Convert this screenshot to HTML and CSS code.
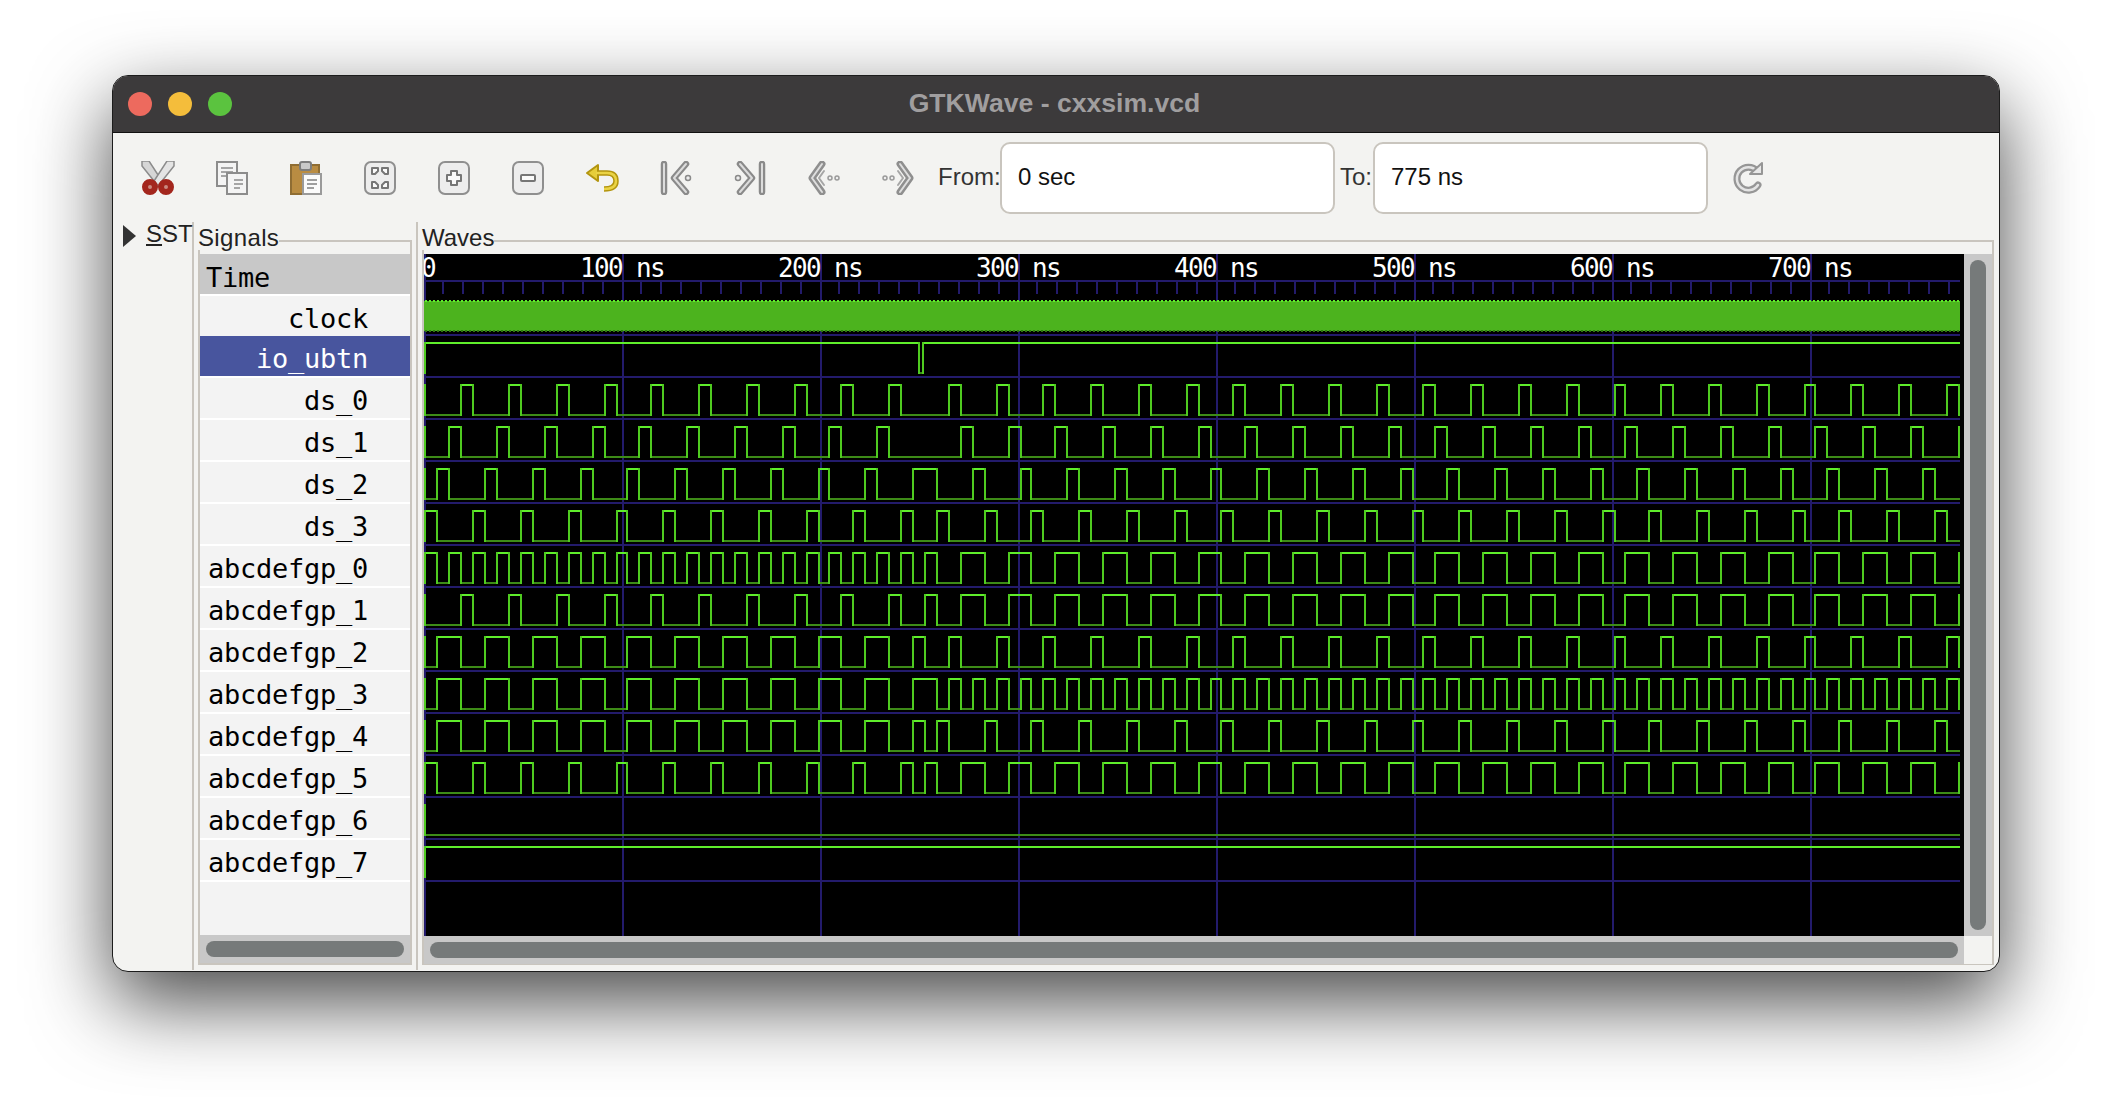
FILE: index.html
```html
<!DOCTYPE html>
<html lang="en">
<head>
  <meta charset="UTF-8" />
  <title>GTKWave - cxxsim.vcd</title>
  <link rel="stylesheet" href="styles.css">
</head>
<body>

  <div class="window">

    <!-- Title bar -->
    <header class="titlebar">
      <div class="lights">
        <span class="light light-red"></span>
        <span class="light light-yellow"></span>
        <span class="light light-green"></span>
      </div>
      <div class="title">GTKWave - cxxsim.vcd</div>
    </header>

    <!-- Toolbar -->
    <div class="toolbar">
      <div class="tool">
        <svg width="34" height="34" viewBox="0 0 34 34">
          <path d="M1 0 L8 0 L21 20 L17 25 L1 5 Z" fill="#d6d6d6" stroke="#8c8c8c" stroke-width="1.5"/>
          <path d="M33 0 L26 0 L13 20 L17 25 L33 5 Z" fill="#e4e4e4" stroke="#8c8c8c" stroke-width="1.5"/>
          <circle cx="9" cy="26" r="5" fill="#c98a80" stroke="#a3261d" stroke-width="6"/>
          <circle cx="25" cy="26" r="5" fill="#c98a80" stroke="#a3261d" stroke-width="6"/>
        </svg>
      </div>
      <div class="tool">
        <svg width="34" height="34" viewBox="0 0 34 34">
          <rect x="2" y="1" width="20" height="24" fill="#f4f4f4" stroke="#8c8c8c" stroke-width="2"/>
          <path d="M6 7 H18 M6 11 H18 M6 15 H15" stroke="#a5a5a5" stroke-width="2"/>
          <rect x="12" y="12" width="20" height="21" fill="#f4f4f4" stroke="#8c8c8c" stroke-width="2"/>
          <path d="M19 19 H28 M19 23 H28 M19 27 H25" stroke="#a5a5a5" stroke-width="2"/>
        </svg>
      </div>
      <div class="tool">
        <svg width="34" height="34" viewBox="0 0 34 34">
          <rect x="2" y="4" width="28" height="29" fill="#b98c42" stroke="#8f6d33" stroke-width="2"/>
          <rect x="11" y="1" width="11" height="8" rx="2" fill="#c9c9c9" stroke="#7d7d7d" stroke-width="2"/>
          <rect x="14" y="13" width="18" height="20" fill="#fbfbfb" stroke="#9a9a9a" stroke-width="2"/>
          <path d="M18 19 H28 M18 23 H28 M18 27 H25" stroke="#9f9f9f" stroke-width="2"/>
        </svg>
      </div>
      <div class="tool">
        <svg width="34" height="34" viewBox="0 0 34 34">
          <rect x="2" y="1" width="30" height="32" rx="6" fill="#ededed" stroke="#8f8f8f" stroke-width="2"/>
          <path d="M9 7 H15 V10 L12 13 H9 Z M25 7 H19 V10 L22 13 H25 Z M9 27 H15 V24 L12 21 H9 Z M25 27 H19 V24 L22 21 H25 Z" fill="#fafafa" stroke="#767676" stroke-width="2" stroke-linejoin="round"/>
        </svg>
      </div>
      <div class="tool">
        <svg width="34" height="34" viewBox="0 0 34 34">
          <rect x="2" y="1" width="30" height="32" rx="6" fill="#ededed" stroke="#8f8f8f" stroke-width="2"/>
          <path d="M14 10 H20 V14 H24 V20 H20 V24 H14 V20 H10 V14 H14 Z" fill="#fafafa" stroke="#767676" stroke-width="2" stroke-linejoin="round"/>
        </svg>
      </div>
      <div class="tool">
        <svg width="34" height="34" viewBox="0 0 34 34">
          <rect x="2" y="1" width="30" height="32" rx="6" fill="#ededed" stroke="#8f8f8f" stroke-width="2"/>
          <rect x="10" y="14" width="14" height="6" rx="1" fill="#fafafa" stroke="#767676" stroke-width="2"/>
        </svg>
      </div>
      <div class="tool">
        <svg width="34" height="34" viewBox="0 0 34 34">
          <path d="M8 12 H22 Q31 12 31 20 Q31 28 19 28" fill="none" stroke="#b3950f" stroke-width="5.5"/>
          <path d="M2 12 L13 4 V20 Z" fill="#e6cd3a" stroke="#b3950f" stroke-width="2" stroke-linejoin="round"/>
          <path d="M11 12 H22 Q31 12 31 20 Q31 28 19 28" fill="none" stroke="#ead345" stroke-width="2.5"/>
        </svg>
      </div>
      <div class="tool">
        <svg width="34" height="34" viewBox="0 0 34 34">
          <path d="M5 3 V31 M27 3 L15 17 L27 31" fill="none" stroke="#8a8a8a" stroke-width="6.5" stroke-linecap="round" stroke-linejoin="round"/>
          <path d="M5 3 V31 M27 3 L15 17 L27 31" fill="none" stroke="#dcdcdc" stroke-width="2" stroke-linecap="round" stroke-linejoin="round"/>
          <circle cx="29" cy="17" r="2.5" fill="#ededed" stroke="#8a8a8a" stroke-width="1.5"/>
        </svg>
      </div>
      <div class="tool">
        <svg width="34" height="34" viewBox="0 0 34 34">
          <path d="M29 3 V31 M7 3 L19 17 L7 31" fill="none" stroke="#8a8a8a" stroke-width="6.5" stroke-linecap="round" stroke-linejoin="round"/>
          <path d="M29 3 V31 M7 3 L19 17 L7 31" fill="none" stroke="#dcdcdc" stroke-width="2" stroke-linecap="round" stroke-linejoin="round"/>
          <circle cx="5" cy="17" r="2.5" fill="#ededed" stroke="#8a8a8a" stroke-width="1.5"/>
        </svg>
      </div>
      <div class="tool">
        <svg width="34" height="34" viewBox="0 0 34 34">
          <path d="M15 3 L5 17 L15 31" fill="none" stroke="#8f8f8f" stroke-width="7" stroke-linecap="round" stroke-linejoin="round"/>
          <path d="M15 3 L5 17 L15 31" fill="none" stroke="#dedede" stroke-width="2" stroke-linecap="round" stroke-linejoin="round"/>
          <path d="M17 10 L12 17 L17 24" fill="none" stroke="#a6a6a6" stroke-width="2" stroke-linecap="round" stroke-linejoin="round"/>
          <circle cx="23" cy="17" r="2" fill="#ededed" stroke="#9a9a9a" stroke-width="1.5"/>
          <circle cx="30" cy="17" r="2" fill="#ededed" stroke="#9a9a9a" stroke-width="1.5"/>
        </svg>
      </div>
      <div class="tool">
        <svg width="34" height="34" viewBox="0 0 34 34">
          <path d="M19 3 L29 17 L19 31" fill="none" stroke="#8f8f8f" stroke-width="7" stroke-linecap="round" stroke-linejoin="round"/>
          <path d="M19 3 L29 17 L19 31" fill="none" stroke="#dedede" stroke-width="2" stroke-linecap="round" stroke-linejoin="round"/>
          <path d="M17 10 L22 17 L17 24" fill="none" stroke="#a6a6a6" stroke-width="2" stroke-linecap="round" stroke-linejoin="round"/>
          <circle cx="4" cy="17" r="2" fill="#ededed" stroke="#9a9a9a" stroke-width="1.5"/>
          <circle cx="11" cy="17" r="2" fill="#ededed" stroke="#9a9a9a" stroke-width="1.5"/>
        </svg>
      </div>

      <span class="range-label from-label">From:</span>
      <div class="range-entry"><span>0 sec</span></div>
      <span class="range-label to-label">To:</span>
      <div class="range-entry"><span>775 ns</span></div>

      <div class="tool reload">
        <svg width="34" height="34" viewBox="0 0 34 34">
          <path d="M25 10 A11.5 11.5 0 1 0 26 24" fill="none" stroke="#969696" stroke-width="7" stroke-linecap="round"/>
          <path d="M25 10 A11.5 11.5 0 1 0 26 24" fill="none" stroke="#e4e4e4" stroke-width="2.5" stroke-linecap="round"/>
          <path d="M18 13 H30 V2 Z" fill="#e8e8e8" stroke="#969696" stroke-width="2" stroke-linejoin="round"/>
        </svg>
      </div>
    </div>

    <!-- Panes -->
    <div class="panes">
      <div class="sst-pane">
        <div class="sst-head">
          <span class="expander"></span>
          <span class="sst-label"><u>S</u>ST</span>
        </div>
      </div>

      <div class="signals-pane">
        <div class="frame-head">
          <span class="frame-label signals-label">Signals</span>
          <span class="frame-rule"></span>
        </div>
        <div class="frame-body">
          <div class="signal-list">
            <div class="signal-time">Time</div>
            <div class="signal-row above-selected">clock</div>
            <div class="signal-row selected">io_ubtn</div>
            <div class="signal-row">ds_0</div>
            <div class="signal-row">ds_1</div>
            <div class="signal-row">ds_2</div>
            <div class="signal-row">ds_3</div>
            <div class="signal-row">abcdefgp_0</div>
            <div class="signal-row">abcdefgp_1</div>
            <div class="signal-row">abcdefgp_2</div>
            <div class="signal-row">abcdefgp_3</div>
            <div class="signal-row">abcdefgp_4</div>
            <div class="signal-row">abcdefgp_5</div>
            <div class="signal-row">abcdefgp_6</div>
            <div class="signal-row">abcdefgp_7</div>
          </div>
          <div class="hscroll"><div class="thumb"></div></div>
        </div>
      </div>

      <div class="waves-pane">
        <div class="frame-head">
          <span class="frame-label">Waves</span>
          <span class="frame-rule"></span>
        </div>
        <div class="frame-body wave-grid">
          <svg id="waves" class="wave-canvas" width="1540" height="682" viewBox="0 0 1540 682"></svg>
          <div class="vscroll"><div class="thumb"></div></div>
          <div class="hscroll"><div class="thumb"></div></div>
          <div class="scroll-corner"></div>
        </div>
      </div>
    </div>
  </div>

  <script src="script.js"></script>
</body>
</html>
```

FILE: styles.css
```css
:root {
  --chrome: #f3f3f1;
  --titlebar: #3c3a3b;
  --line: #c9c5be;
  --trough: #c8c8c8;
  --thumb: #767a7a;
  --selected: #48559e;
}

* {
  box-sizing: border-box;
}

body {
  margin: 0;
  padding: 75px 0 0 112px;
  height: 100vh;
  overflow: hidden;
  background: #fff;
  font-family: "Liberation Sans", Arial, sans-serif;
  font-size: 24px;
  color: #222;
}

.window {
  width: 1888px;
  height: 897px;
  display: flex;
  flex-direction: column;
  background: var(--chrome);
  border: 1px solid #1c1c1c;
  border-radius: 16px;
  overflow: hidden;
  box-shadow: 0 30px 80px rgba(0, 0, 0, 0.72);
}

.titlebar {
  height: 57px;
  flex: none;
  display: flex;
  align-items: center;
  background: var(--titlebar);
  border-bottom: 1px solid #111;
}

.lights {
  display: flex;
  gap: 16px;
  padding-left: 15px;
  width: 119px;
}

.light {
  width: 24px;
  height: 24px;
  border-radius: 50%;
}

.light-red { background: #ed6a5e; }
.light-yellow { background: #f4bd3b; }
.light-green { background: #5bc33f; }

.title {
  flex: 1;
  padding: 0 122px 2px 0;
  text-align: center;
  font-size: 26.6px;
  font-weight: bold;
  color: #a09e9f;
}

.toolbar {
  height: 89px;
  flex: none;
  display: flex;
  align-items: center;
  padding-left: 8px;
}

.tool {
  width: 74px;
  flex: none;
  display: flex;
  justify-content: center;
}

.range-label {
  flex: none;
  padding-bottom: 2px;
  color: #333;
}

.from-label {
  margin-left: 3px;
  width: 62px;
}

.to-label {
  margin-left: 5px;
  width: 33px;
}

.range-entry {
  width: 335px;
  height: 72px;
  flex: none;
  display: flex;
  align-items: center;
  padding: 0 0 2px 16px;
  background: #fff;
  border: 2px solid var(--line);
  border-radius: 10px;
  color: #111;
}

.reload {
  margin-left: 4px;
}

.panes {
  flex: 1;
  display: flex;
  min-height: 0;
}

.sst-pane {
  width: 81px;
  flex: none;
  border-right: 2px solid var(--line);
  margin-bottom: 1px;
}

.sst-head {
  height: 28px;
  display: flex;
  align-items: center;
  padding-left: 10px;
  gap: 10px;
}

.expander {
  width: 0;
  height: 0;
  border-style: solid;
  border-width: 11px 0 11px 13px;
  border-color: transparent transparent transparent #333;
}

.sst-label {
  line-height: 24px;
  margin-top: -4px;
  white-space: nowrap;
}

.signals-pane,
.waves-pane {
  display: flex;
  flex-direction: column;
  padding: 0 0 5px 4px;
  margin-bottom: 1px;
}

.signals-pane {
  width: 224px;
  flex: none;
  padding-right: 4px;
  border-right: 2px solid var(--line);
}

.waves-pane {
  flex: 1;
  padding-right: 5px;
}

.frame-head {
  height: 28px;
  flex: none;
  display: flex;
}

.frame-label {
  line-height: 28px;
  padding-top: 2px;
  white-space: nowrap;
}

.signals-label {
  letter-spacing: 0.35px;
}

.frame-rule {
  flex: 1;
  align-self: flex-end;
  height: 10px;
  border-top: 2px solid var(--line);
  border-right: 2px solid var(--line);
}

.frame-body {
  flex: 1;
  display: flex;
  flex-direction: column;
  min-height: 0;
  padding-top: 4px;
  border: 2px solid var(--line);
  border-top: 0;
}

.signal-list {
  flex: 1;
  background: #f3f3f3;
  font-family: "DejaVu Sans Mono", monospace;
  font-size: 27px;
  letter-spacing: -0.25px;
  color: #000;
}

.signal-time {
  height: 42px;
  padding: 5px 6px 0;
  line-height: 38px;
  background: var(--trough);
  background-clip: padding-box;
  border-bottom: 2px solid #fff;
}

.signal-row {
  height: 42px;
  padding: 4px 42px 0 0;
  line-height: 38px;
  text-align: right;
  border-bottom: 2px solid #fff;
}

.signal-row.above-selected {
  height: 40px;
  border-bottom: 0;
}

.signal-row.selected {
  background: var(--selected);
  color: #fff;
}

.hscroll {
  height: 28px;
  flex: none;
  padding: 6px;
  background: var(--trough);
}

.vscroll {
  padding: 6px;
  background: var(--trough);
}

.thumb {
  width: 100%;
  height: 100%;
  border-radius: 8px;
  background: var(--thumb);
}

.wave-grid {
  display: grid;
  grid-template-columns: 1540px 28px;
  grid-template-rows: 682px 28px;
}

.wave-canvas {
  display: block;
  background: #000;
}

.scroll-corner {
  background: var(--chrome);
}

.ruler-label {
  font-family: "DejaVu Sans Mono", monospace;
  font-size: 26px;
  letter-spacing: -1.65px;
  fill: #fff;
}
```

FILE: script.js
```js
// GTKWave traces. One time slot is 6 ns, screen x is quantized to 2px.
const SLOT = 6;
const END_NS = 775;
const OX = 424;
const OY = 254;
const GRID = "#231b6c";
const HIGH = "#5fee2b";
const EDGE = "#4fcb20";
const LOW = "#3d8b17";

const svg = document.getElementById("waves");

function xAt(t) {
  if (t === 0) return 425 - OX;
  return 427 + 2 * Math.floor(t * 0.99) - OX;
}

// before 246ns / the three slots of the button press / after
const signals = [
  { before: "0001", press: "000", after: "1000" }, // ds_0
  { before: "0010", press: "000", after: "0100" }, // ds_1
  { before: "0100", press: "110", after: "0010" }, // ds_2
  { before: "1000", press: "001", after: "0001" }, // ds_3
  { before: "1010", press: "010", after: "0110" }, // abcdefgp_0
  { before: "0001", press: "010", after: "0110" }, // abcdefgp_1
  { before: "0110", press: "100", after: "1000" }, // abcdefgp_2
  { before: "0110", press: "110", after: "1010" }, // abcdefgp_3
  { before: "0110", press: "101", after: "0001" }, // abcdefgp_4
  { before: "1000", press: "010", after: "0110" }, // abcdefgp_5
  { before: "0000", press: "000", after: "0000" }, // abcdefgp_6
  { before: "1111", press: "111", after: "1111" }, // abcdefgp_7
];

function levelAt(sig, s) {
  if (s < 41) return sig.before[s % 4];
  if (s < 44) return sig.press[s - 41];
  return sig.after[s % 4];
}

let highPath = "";
let lowPath = "";
let edgePath = "";

function addRow(base, events) {
  const hi = base - 34 - OY;
  const lo = base - 4 - OY;
  edgePath += `M${xAt(0)} ${hi - 1}V${lo + 1}`;
  for (let i = 0; i < events.length; i++) {
    const x1 = xAt(events[i].t);
    const x2 = i + 1 < events.length ? xAt(events[i + 1].t) : 1960 - OX;
    if (events[i].level === "1") highPath += `M${x1} ${hi}H${x2}`;
    else lowPath += `M${x1} ${lo}H${x2}`;
    if (i > 0) edgePath += `M${x1} ${hi - 1}V${lo + 1}`;
  }
}

signals.forEach((sig, row) => {
  const events = [];
  for (let s = 0; s * SLOT < END_NS; s++) {
    const level = levelAt(sig, s);
    if (!events.length || events[events.length - 1].level !== level) {
      events.push({ t: s * SLOT, level: level });
    }
  }
  addRow(419 + row * 42, events);
});

// io_ubtn: high, with a short dip when the button is pressed
edgePath += `M${xAt(0)} ${342 - OY}V${374 - OY}`;
highPath += `M${xAt(0)} ${343 - OY}H${919 - OX}M${923 - OX} ${343 - OY}H${1960 - OX}`;
lowPath += `M${919 - OX} ${373 - OY}H${923 - OX}`;
edgePath += `M${919 - OX} ${342 - OY}V${374 - OY}M${923 - OX} ${342 - OY}V${374 - OY}`;

let gridPath = `M0 ${281 - OY}H${1960 - OX}`;
for (let base = 335; base <= 881; base += 42) {
  gridPath += `M0 ${base - OY}H${1960 - OX}`;
}
for (let k = 0; k < 78; k++) {
  const x = 425 + 2 * Math.floor(k * 9.9) - OX;
  if (k % 10 !== 0) gridPath += `M${x} ${281 - OY}V${294 - OY}`;
}

let labels = `<text class="ruler-label" x="-3" y="${277 - OY}">0</text>`;
for (let k = 0; k < 8; k++) {
  const x = 425 + 198 * k - OX;
  gridPath += `M${x} 0V682`;
  if (k > 0) {
    labels += `<text class="ruler-label" x="${x - 43}" y="${277 - OY}" xml:space="preserve">${k * 100} ns</text>`;
  }
}

const clockX1 = 425 - OX;
const clockX2 = 1960 - OX;

svg.innerHTML = `
  <path d="${gridPath}" fill="none" stroke="${GRID}" stroke-width="2" shape-rendering="crispEdges"/>
  ${labels}
  <rect x="${clockX1 - 1}" y="${301 - OY}" width="${clockX2 - clockX1 + 1}" height="30" fill="#4cb31e"/>
  <path d="M${clockX1} ${301 - OY}H${clockX2}" stroke="${HIGH}" stroke-width="2" stroke-dasharray="2 2" shape-rendering="crispEdges"/>
  <path d="M${clockX1} ${331 - OY}H${clockX2}" stroke="#2f7a10" stroke-width="2" stroke-dasharray="2 2" shape-rendering="crispEdges"/>
  <path d="${lowPath}" fill="none" stroke="${LOW}" stroke-width="2" shape-rendering="crispEdges"/>
  <path d="${highPath}" fill="none" stroke="${HIGH}" stroke-width="2" shape-rendering="crispEdges"/>
  <path d="${edgePath}" fill="none" stroke="${EDGE}" stroke-width="2" shape-rendering="crispEdges"/>
`;
```
